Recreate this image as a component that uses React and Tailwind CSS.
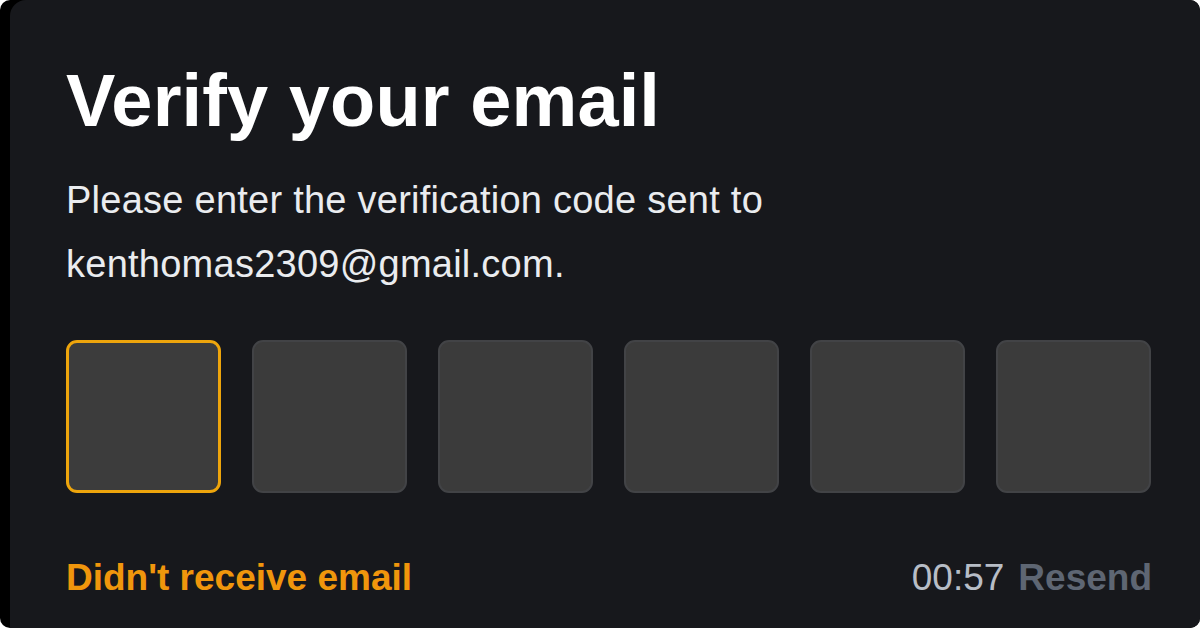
export default function App() {
  const boxes = [0, 1, 2, 3, 4, 5];

  return (
    <div className="w-[1200px] h-[628px] bg-white overflow-hidden">
      <div className="h-full bg-black rounded-[10px] pl-[10px] overflow-hidden">
        <div
          className="h-full bg-[#17181c] rounded-tl-[16px] rounded-tr-[8px] pl-[56px] pr-[48px] pt-[64px] text-white"
          style={{ fontFamily: '"Liberation Sans", Arial, sans-serif' }}
        >
          <h1 className="text-[74px] leading-[74px] font-bold tracking-[0.1px]">Verify your email</h1>

          <p className="mt-[30px] text-[38px] leading-[64px] text-[#eaecef] tracking-[0.25px]">
            Please enter the verification code sent to
            <br />
            kenthomas2309@gmail.com.
          </p>

          <div className="mt-[44px] flex gap-[31px]">
            {boxes.map((i) => (
              <div
                key={i}
                className={
                  i === 0
                    ? "w-[155px] h-[153px] rounded-[11px] bg-[#3c3c3c] border-[3px] border-[#eea50c]"
                    : "w-[155px] h-[153px] rounded-[11px] bg-[#3b3b3b] border-2 border-[#424346]"
                }
              />
            ))}
          </div>

          <div className="mt-[61px] flex items-center justify-between text-[37px] leading-[48px]">
            <span className="font-bold text-[#f0960c]">Didn't receive email</span>
            <span className="flex gap-[14px]">
              <span className="text-[#b7bdc6]">00:57</span>
              <span className="font-bold text-[#5e6673]">Resend</span>
            </span>
          </div>
        </div>
      </div>
    </div>
  );
}
